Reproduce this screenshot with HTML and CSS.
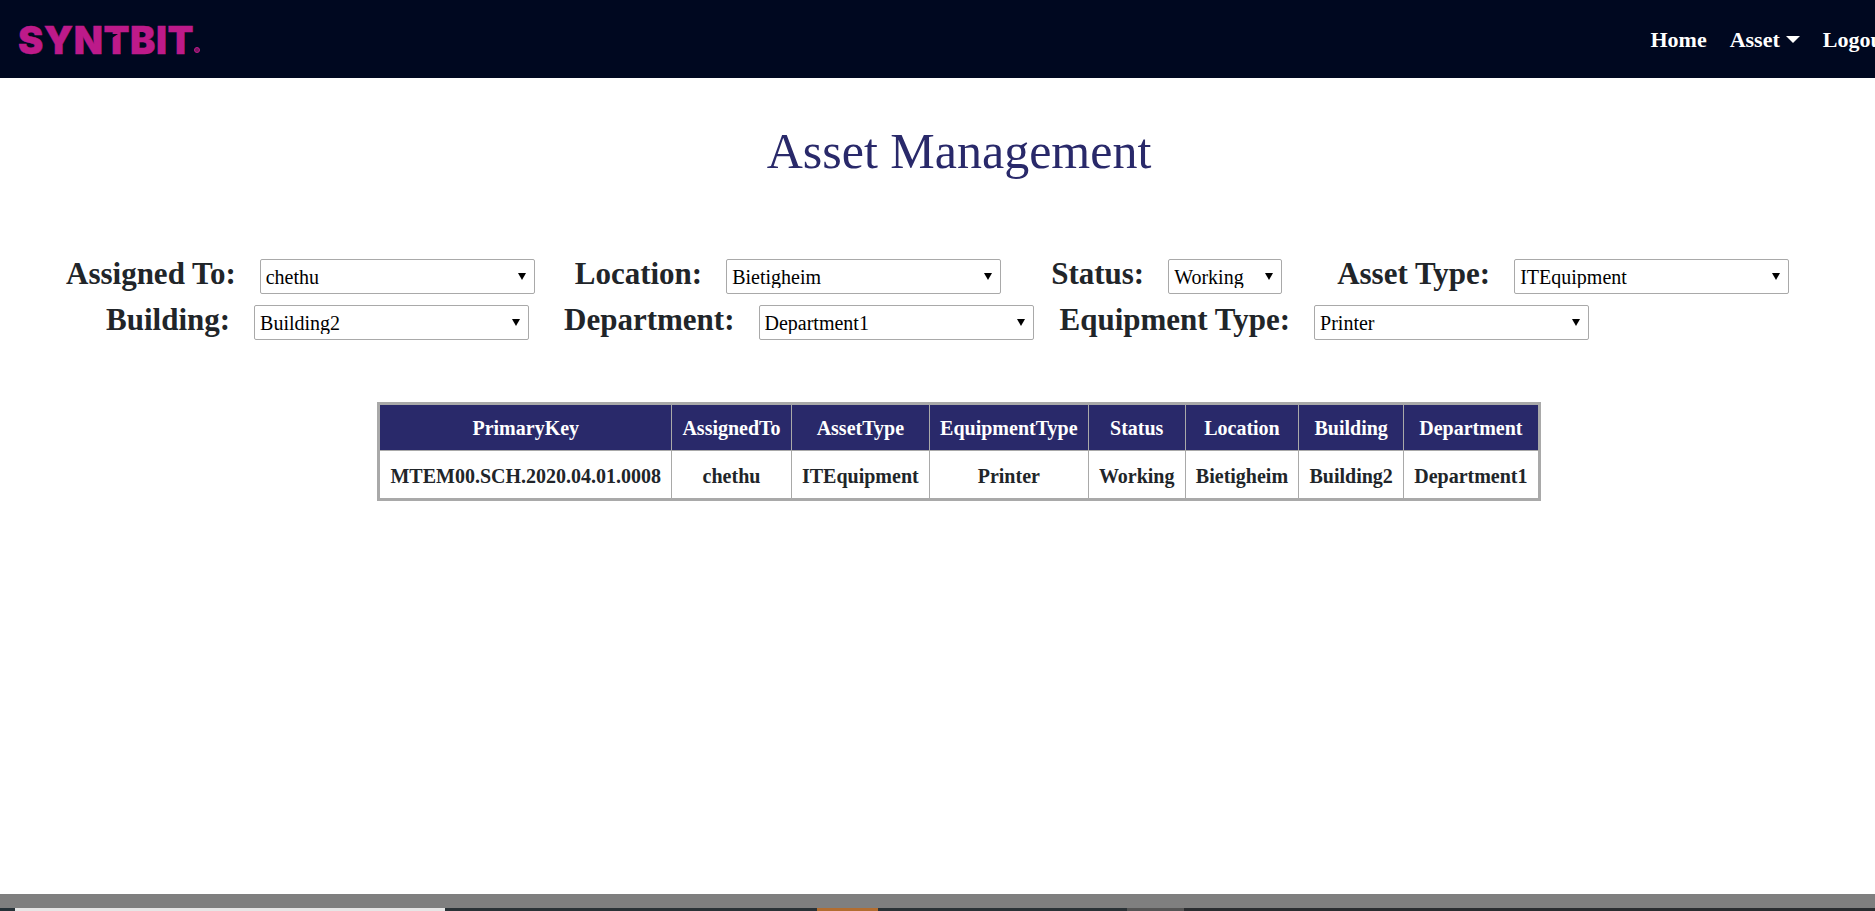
FILE: index.html
```html
<!DOCTYPE html>
<html lang="en">

<head>
  <meta charset="UTF-8">
  <meta name="viewport" content="width=device-width, initial-scale=1.0">
  <title>Asset Management</title>
  <link rel="stylesheet" href="styles.css">
</head>

<body>
  <header class="navbar">
    <a class="brand" href="#home">SYN<span class="brand-t">T</span>BIT<span class="brand-dot"></span></a>
    <nav>
      <ul class="nav-links">
        <li><a href="#home">Home</a></li>
        <li><a href="#asset">Asset<span class="caret"></span></a></li>
        <li><a href="#logout">Logout</a></li>
      </ul>
    </nav>
  </header>

  <main>
    <h1 class="page-title">Asset Management</h1>

    <section class="filters">
      <div class="filter-row row-one">
        <label for="assigned">Assigned To:</label>
        <select id="assigned" class="wide gap-40">
          <option>chethu</option>
        </select>
        <label for="location">Location:</label>
        <select id="location" class="wide gap-50">
          <option>Bietigheim</option>
        </select>
        <label for="status">Status:</label>
        <select id="status" class="narrow gap-55">
          <option>Working</option>
        </select>
        <label for="asset-type">Asset Type:</label>
        <select id="asset-type" class="wide">
          <option>ITEquipment</option>
        </select>
      </div>
      <div class="filter-row row-two">
        <label for="building">Building:</label>
        <select id="building" class="wide gap-35">
          <option>Building2</option>
        </select>
        <label for="department">Department:</label>
        <select id="department" class="wide gap-26">
          <option>Department1</option>
        </select>
        <label for="equipment">Equipment Type:</label>
        <select id="equipment" class="wide">
          <option>Printer</option>
        </select>
      </div>
    </section>

    <section class="results">
      <table class="asset-table">
        <thead>
          <tr>
            <th>PrimaryKey</th>
            <th>AssignedTo</th>
            <th>AssetType</th>
            <th>EquipmentType</th>
            <th>Status</th>
            <th>Location</th>
            <th>Building</th>
            <th>Department</th>
          </tr>
        </thead>
        <tbody>
          <tr>
            <td>MTEM00.SCH.2020.04.01.0008</td>
            <td>chethu</td>
            <td>ITEquipment</td>
            <td>Printer</td>
            <td>Working</td>
            <td>Bietigheim</td>
            <td>Building2</td>
            <td>Department1</td>
          </tr>
        </tbody>
      </table>
    </section>
  </main>

  <div class="bottom-strip">
    <div class="gray-band"></div>
    <div class="taskbar">
      <span class="task-start"></span>
      <span class="task-search"></span>
      <span class="task-gap-one"></span>
      <span class="task-orange"></span>
      <span class="task-gap-two"></span>
      <span class="task-gray"></span>
      <span class="task-rest"></span>
    </div>
  </div>
</body>

</html>
```

FILE: styles.css
```css
/* Page */
* {
  margin: 0;
  padding: 0;
  box-sizing: border-box;
}

html {
  height: 911px;
  overflow: hidden;
}

body {
  display: flex;
  flex-direction: column;
  width: 1918px;
  height: 911px;
  font-family: "Liberation Serif", "Times New Roman", serif;
  color: #212529;
  background-color: #fff;
}

main {
  flex: 1;
}

/* Navbar */
.navbar {
  display: flex;
  justify-content: space-between;
  align-items: center;
  height: 78px;
  padding: 2px 28px 0 18px;
  background-color: #000820;
}

.brand {
  display: flex;
  align-items: flex-end;
  font-family: Inter, "Liberation Sans", sans-serif;
  font-size: 38px;
  font-weight: 900;
  line-height: 28px;
  letter-spacing: 0.5px;
  color: #bd1a8a;
  text-decoration: none;
  -webkit-text-stroke: 0.4px #bd1a8a;
}

.brand-t {
  position: relative;
}

/* wedge cut under the bar of the T */
.brand-t::after {
  content: "";
  position: absolute;
  top: 8px;
  left: 8px;
  border-top: 4px solid #000820;
  border-right: 6px solid transparent;
}

.brand-dot {
  width: 6px;
  height: 6px;
  margin: 0 0 1px;
  border: 1px solid #bd1a8a;
  border-radius: 50%;
  background-color: #7a1560;
}

.nav-links {
  display: flex;
  gap: 23px;
  list-style-type: none;
}

.nav-links a {
  font-size: 22px;
  font-weight: 700;
  color: #fff;
  text-decoration: none;
  white-space: nowrap;
}

.caret {
  display: inline-block;
  margin-left: 6px;
  vertical-align: 4px;
  border-top: 7px solid #fff;
  border-left: 7px solid transparent;
  border-right: 7px solid transparent;
}

/* Heading */
.page-title {
  margin-top: 44px;
  font-size: 50px;
  font-weight: 400;
  line-height: 58px;
  text-align: center;
  color: #29296a;
}

/* Filter rows */
.filters {
  margin-top: 79px;
}

.filter-row {
  display: flex;
  align-items: center;
  height: 35px;
}

.row-one {
  padding-left: 66px;
}

.row-two {
  margin-top: 11px;
  padding-left: 106px;
}

.filter-row label {
  margin-right: 24px;
  padding-bottom: 6px;
  font-size: 31px;
  font-weight: 700;
  white-space: nowrap;
}

.filter-row select {
  height: 35px;
  padding-left: 5px;
  font-family: inherit;
  font-size: 20px;
  color: #000;
  appearance: none;
  background-color: #fff;
  background-image: url("data:image/svg+xml,%3Csvg xmlns='http://www.w3.org/2000/svg' width='8' height='7'%3E%3Cpath d='M0 0h8L4 7z' fill='%23000'/%3E%3C/svg%3E");
  background-repeat: no-repeat;
  background-position: right 8px center;
  border: 1px solid #a9a9a9;
  border-radius: 2px;
}

select.wide {
  width: 275px;
}

select.narrow {
  width: 114px;
}

.gap-26 {
  margin-right: 26px;
}

.gap-35 {
  margin-right: 35px;
}

.gap-40 {
  margin-right: 40px;
}

.gap-50 {
  margin-right: 50px;
}

.gap-55 {
  margin-right: 55px;
}

/* Table */
.results {
  display: flex;
  justify-content: center;
  margin-top: 62px;
}

.asset-table {
  border-collapse: collapse;
  border: 3px solid #a9a9a9;
  font-size: 20px;
  font-weight: 700;
  text-align: center;
}

.asset-table th,
.asset-table td {
  padding: 0 10.2px;
  border: 1px solid #a9a9a9;
  white-space: nowrap;
}

.asset-table th {
  height: 47px;
  padding-top: 1px;
  color: #fff;
  background-color: #29296a;
}

.asset-table td {
  height: 49px;
  padding-top: 3px;
  color: #212529;
}

/* Window strip along the bottom */
.bottom-strip {
  flex-shrink: 0;
}

.gray-band {
  height: 14px;
  background-color: #7f7f7f;
}

.taskbar {
  display: flex;
  height: 3px;
}

.task-start {
  width: 15px;
  background-color: #263238;
}

.task-search {
  width: 430px;
  background-color: #e6e6e6;
}

.task-gap-one {
  width: 372px;
  background-color: #2a3236;
}

.task-orange {
  width: 61px;
  background-color: #b26d30;
}

.task-gap-two {
  width: 249px;
  background-color: #2a3236;
}

.task-gray {
  width: 57px;
  background-color: #555;
}

.task-rest {
  flex: 1;
  background-color: #2a2d30;
}
```
